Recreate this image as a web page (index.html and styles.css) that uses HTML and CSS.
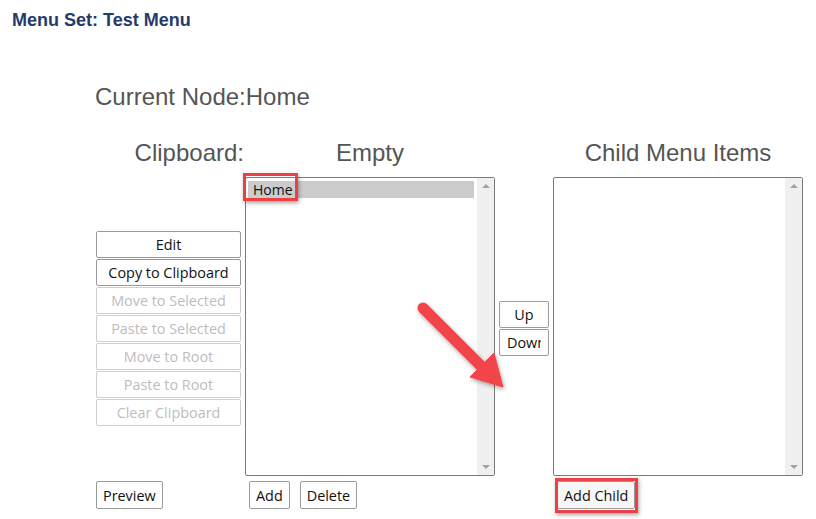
FILE: index.html
```html
<!DOCTYPE html>
<html lang="en">
<head>
    <meta charset="UTF-8">
    <title>Menu Set: Test Menu</title>
    <link rel="stylesheet" href="styles.css">
</head>
<body>
    <h1 class="menu-set">Menu Set: Test Menu</h1>

    <h2 class="current-node">Current Node:Home</h2>

    <div class="editor">
        <div class="col-head clip-head">Clipboard:</div>
        <div class="col-head">Empty</div>
        <div></div>
        <div class="col-head">Child Menu Items</div>

        <div class="clip-buttons">
            <button class="btn wide">Edit</button>
            <button class="btn wide">Copy to Clipboard</button>
            <button class="btn wide" disabled>Move to Selected</button>
            <button class="btn wide" disabled>Paste to Selected</button>
            <button class="btn wide" disabled>Move to Root</button>
            <button class="btn wide" disabled>Paste to Root</button>
            <button class="btn wide" disabled>Clear Clipboard</button>
        </div>

        <div class="listbox">
            <div class="list-items">
                <div class="list-item selected"><span class="callout">Home</span></div>
            </div>
            <div class="scrollbar">
                <span class="arrow up"></span>
                <span class="arrow down"></span>
            </div>
        </div>

        <div class="order-buttons">
            <button class="btn narrow">Up</button>
            <button class="btn narrow"><span class="clip">Down</span></button>
        </div>

        <div class="listbox">
            <div class="list-items"></div>
            <div class="scrollbar">
                <span class="arrow up"></span>
                <span class="arrow down"></span>
            </div>
        </div>

        <div class="foot">
            <button class="btn">Preview</button>
        </div>
        <div class="foot indent">
            <button class="btn">Add</button>
            <button class="btn">Delete</button>
        </div>
        <div></div>
        <div class="foot indent">
            <button class="btn callout">Add Child</button>
        </div>
    </div>

    <!-- annotation arrow drawn over the screenshot -->
    <svg class="pointer" width="816" height="519" viewBox="0 0 816 519">
        <defs>
            <filter id="arrow-shadow" x="-20%" y="-20%" width="140%" height="140%">
                <feDropShadow dx="1" dy="2" stdDeviation="2" flood-color="#000" flood-opacity="0.35"/>
            </filter>
        </defs>
        <g filter="url(#arrow-shadow)" fill="#f2444a" stroke="#f2444a">
            <line x1="423" y1="308" x2="483" y2="368" stroke-width="11" stroke-linecap="round"/>
            <polygon points="470,377 494,353 503,387" stroke-width="1" stroke-linejoin="round"/>
        </g>
    </svg>
</body>
</html>
```

FILE: styles.css
```css
body {
    margin: 0;
    padding: 10px 0 0 0;
    background-color: #fff;
    font-family: "Liberation Sans", Arial, sans-serif;
    color: #555;
    width: 816px;
    height: 519px;
    overflow: hidden;
    position: relative;
}

.menu-set {
    margin: 0 0 0 12px;
    font-size: 18px;
    line-height: 20px;
    font-weight: bold;
    color: #263a6c;
}

.current-node {
    margin: 53px 0 0 95px;
    font-size: 24px;
    line-height: 28px;
    font-weight: normal;
    color: #555;
}

.editor {
    display: grid;
    grid-template-columns: 145px 250px 50px 250px;
    grid-template-rows: 28px 309px auto;
    column-gap: 4px;
    margin: 28px 0 0 96px;
}

.col-head {
    font-size: 24px;
    line-height: 28px;
    text-align: center;
    color: #555;
    white-space: nowrap;
}

.clip-head {
    text-align: right;
    margin-right: -3px;
}

.editor > .clip-buttons,
.editor > .listbox,
.editor > .order-buttons {
    margin-top: 10px;
}

.clip-buttons,
.order-buttons {
    display: flex;
    flex-direction: column;
    justify-content: center;
    gap: 1px;
}

.clip-buttons {
    padding-top: 3px;
}

.order-buttons {
    padding-top: 4px;
}

.btn {
    font-family: "Open Sans", "Noto Sans", sans-serif;
    font-size: 14.4px;
    height: 27px;
    padding: 0 6px;
    background-color: #fff;
    color: #111;
    border: 1px solid #9a9a9a;
    border-radius: 2px;
    white-space: nowrap;
    cursor: pointer;
}

.btn:disabled {
    color: #bdbdbd;
    border-color: #cfcfcf;
    cursor: default;
}

.btn.wide {
    width: 145px;
}

.btn.narrow {
    width: 50px;
    overflow: hidden;
    text-align: center;
    padding: 0 7px;
}

.btn .clip {
    display: block;
    width: 34px;
    overflow: hidden;
    text-align: left;
}

.listbox {
    display: flex;
    border: 1px solid #7a7a7a;
    border-radius: 2px;
    height: 299px;
    box-sizing: border-box;
    background-color: #fff;
}

.list-items {
    flex: 1;
    padding: 3px 3px 3px 2px;
}

.list-item {
    font-family: "Open Sans", "Noto Sans", sans-serif;
    font-size: 14px;
    line-height: 17px;
    height: 17px;
    padding-left: 5px;
    color: #111;
}

.list-item.selected {
    background-color: #cccccc;
}

.scrollbar {
    width: 17px;
    background-color: #f0f0f0;
    display: flex;
    flex-direction: column;
    justify-content: space-between;
    align-items: center;
    padding: 6px 0 6px;
}

.arrow {
    width: 0;
    height: 0;
    border-left: 4px solid transparent;
    border-right: 4px solid transparent;
}

.arrow.up {
    border-bottom: 4px solid #a3a3a3;
}

.arrow.down {
    border-top: 4px solid #a3a3a3;
}

.foot {
    display: flex;
    align-items: flex-start;
    gap: 10px;
    margin-top: 5px;
}

.foot .btn {
    height: 28px;
}

.foot.indent {
    padding-left: 4px;
}

/* red annotation boxes from the screenshot */
.callout {
    position: relative;
}

.callout::after {
    content: "";
    position: absolute;
    border: 3px solid #ee3f45;
    box-shadow: 1px 2px 4px rgba(0, 0, 0, 0.35);
    pointer-events: none;
}

.list-item .callout::after {
    left: -10px;
    top: -7px;
    width: 49px;
    height: 22px;
}

.btn.callout {
    background-color: #f7f7f7;
}

.btn.callout::after {
    left: -3px;
    top: -4px;
    right: -4px;
    bottom: -5px;
}

.pointer {
    position: absolute;
    left: 0;
    top: 0;
    pointer-events: none;
}
```
